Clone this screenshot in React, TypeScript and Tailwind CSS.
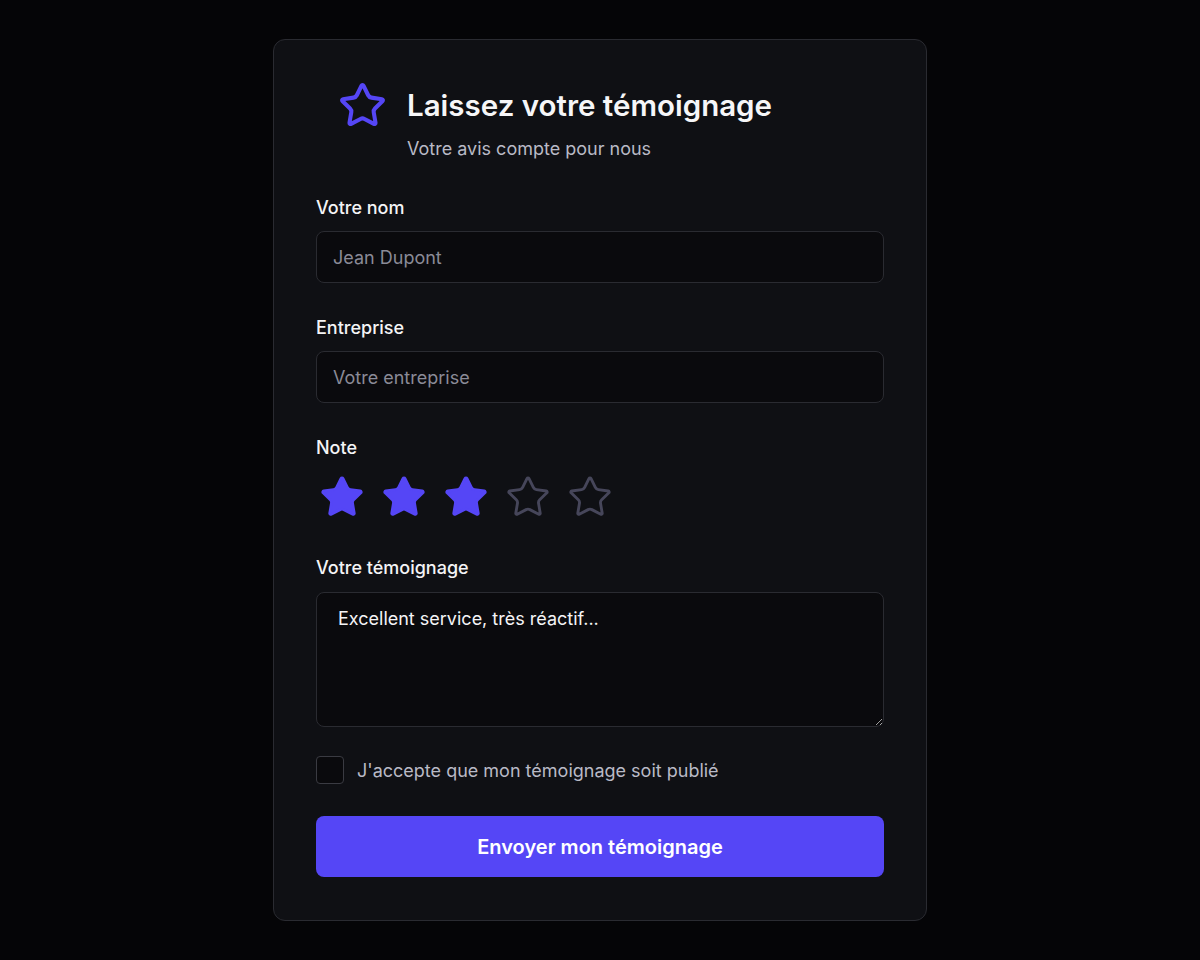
import { Star } from "lucide-react"

const font = { fontFamily: "Inter, 'Noto Sans', sans-serif" }

function Field({ label, placeholder }: { label: string; placeholder: string }) {
  return (
    <div className="flex flex-col">
      <label className="text-[18px] leading-6 font-medium text-[#f4f4f6]">{label}</label>
      <input
        placeholder={placeholder}
        className="mt-[11px] h-[52px] w-full rounded-lg border border-[#2a2b31] bg-[#0a0a0d] px-4 text-[18px] text-white outline-none placeholder:text-[#8a8b97]"
      />
    </div>
  )
}

export default function App() {
  const rating = 3

  return (
    <div className="min-h-[960px] w-full bg-[#050507] flex justify-center pt-[39px]" style={font}>
      <div className="w-[654px] h-[882px] rounded-xl border border-[#2a2b31] bg-[#0f1014] px-[42px] pt-[43px]">
        {/* header */}
        <div className="flex pl-[22px]">
          <Star className="w-[49px] h-[49px] text-[#5546f6] shrink-0 -mt-[2px]" strokeWidth={2} />
          <div className="ml-[20px] flex flex-col">
            <h1 className="text-[29.5px] leading-[34px] font-semibold text-[#f6f6f8] mt-[5px]">Laissez votre témoignage</h1>
            <p className="mt-[15px] text-[18px] leading-6 text-[#b9bac6]">Votre avis compte pour nous</p>
          </div>
        </div>

        <form className="mt-[35px] flex flex-col" onSubmit={(e) => e.preventDefault()}>
          <Field label="Votre nom" placeholder="Jean Dupont" />
          <div className="mt-[33px]">
            <Field label="Entreprise" placeholder="Votre entreprise" />
          </div>

          <div className="mt-[33px] flex flex-col">
            <span className="text-[18px] leading-6 font-medium text-[#f4f4f6]">Note</span>
            <div className="mt-[14px] flex gap-[16px] ml-[3px]">
              {[1, 2, 3, 4, 5].map((n) => (
                <Star
                  key={n}
                  className={n <= rating ? "w-[46px] h-[46px] text-[#5546f6] fill-[#5546f6]" : "w-[46px] h-[46px] text-[#46465a]"}
                  strokeWidth={1.5}
                />
              ))}
            </div>
          </div>

          <div className="mt-[36px] flex flex-col">
            <label className="text-[18px] leading-6 font-medium text-[#f4f4f6]">Votre témoignage</label>
            <textarea
              defaultValue="Excellent service, très réactif..."
              className="mt-3 h-[135px] w-full rounded-lg border border-[#2a2b31] bg-[#0a0a0d] px-[21px] py-[14px] text-[18px] leading-6 text-[#f4f4f6] outline-none"
            />
          </div>

          <label className="mt-[29px] flex items-center gap-[13px]">
            <span className="w-[28px] h-[28px] rounded border border-[#3a3b42] bg-[#0a0a0d]" />
            <span className="text-[18px] text-[#b9bac6]">J'accepte que mon témoignage soit publié</span>
          </label>

          <button
            type="submit"
            className="mt-[32px] h-[61px] w-full rounded-lg bg-[#5546f6] text-[20px] font-semibold text-white"
          >
            Envoyer mon témoignage
          </button>
        </form>
      </div>
    </div>
  )
}
